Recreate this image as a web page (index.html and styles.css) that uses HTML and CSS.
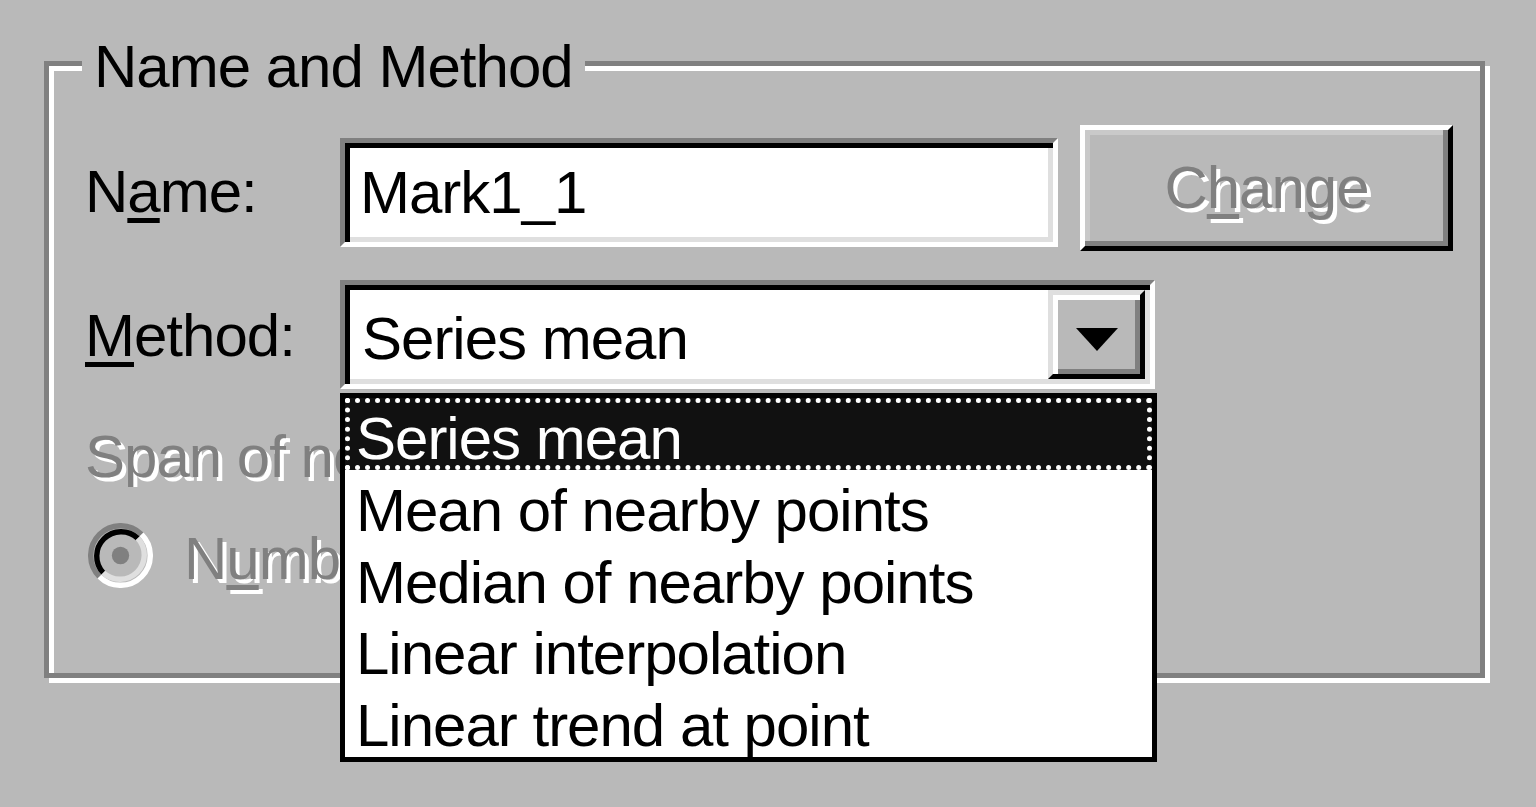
FILE: index.html
```html
<!DOCTYPE html>
<html lang="en">
<head>
<meta charset="utf-8">
<title>Name and Method</title>
<link rel="stylesheet" href="styles.css">
</head>
<body>
<div class="group">
  <div class="group-title">Name and Method</div>

  <div class="row row-name">
    <label class="lbl lbl-name">N<u>a</u>me:</label>
    <div class="field sunken">Mark1_1</div>
    <div class="btn disabled-text">C<u>h</u>ange</div>
  </div>

  <div class="row row-method">
    <label class="lbl lbl-method"><u>M</u>ethod:</label>
    <div class="combo-wrap">
      <div class="combo sunken">
        <span class="combo-value">Series mean</span>
        <span class="combo-btn">
          <svg class="arrow" width="42" height="23" viewBox="0 0 42 23"><polygon points="0,0 42,0 21,23" fill="#000"/></svg>
        </span>
      </div>
      <ul class="listbox">
        <li class="item selected">Series mean</li>
        <li class="item">Mean of nearby points</li>
        <li class="item">Median of nearby points</li>
        <li class="item">Linear interpolation</li>
        <li class="item">Linear trend at point</li>
      </ul>
    </div>
  </div>

  <div class="span-label disabled-text">Span of nearby points:</div>

  <div class="radio-row">
    <svg class="radio" width="65" height="65" viewBox="0 0 12 12">
      <path d="M2.11 9.89 A5.5 5.5 0 0 1 9.89 2.11" fill="none" stroke="#808080" stroke-width="1"/>
      <path d="M9.89 2.11 A5.5 5.5 0 0 1 2.11 9.89" fill="none" stroke="#ffffff" stroke-width="1"/>
      <path d="M2.82 9.18 A4.5 4.5 0 0 1 9.18 2.82" fill="none" stroke="#000000" stroke-width="1"/>
      <path d="M9.18 2.82 A4.5 4.5 0 0 1 2.82 9.18" fill="none" stroke="#dfdfdf" stroke-width="1"/>
      <circle cx="6" cy="6" r="1.6" fill="#808080"/>
    </svg>
    <span class="radio-label disabled-text">N<u>u</u>mber:</span>
  </div>
</div>
</body>
</html>
```

FILE: styles.css
```css
html, body {
  margin: 0;
  padding: 0;
  background: #b9b9b9;
}

body {
  width: 1536px;
  height: 807px;
  overflow: hidden;
  font-family: "Liberation Sans", Arial, sans-serif;
  font-size: 60px;
  letter-spacing: -1px;
  color: #000;
}

u {
  text-decoration: underline;
  text-decoration-thickness: 5px;
  text-underline-offset: 6px;
}

.group {
  position: relative;
  box-sizing: border-box;
  margin: 61px 0 0 44px;
  width: 1441px;
  height: 617px;
  border: 5px solid #808080;
  box-shadow: inset 5px 5px 0 #ffffff, 5px 5px 0 #ffffff;
  padding: 59px 0 0 36px;
}

.group-title {
  position: absolute;
  left: 33px;
  top: -29px;
  padding: 0 12px;
  line-height: 60px;
  background: #b9b9b9;
  white-space: nowrap;
}

.row {
  display: flex;
  align-items: flex-start;
}

.row-name {
  height: 126px;
}

.lbl {
  width: 255px;
  flex: none;
  line-height: 60px;
  white-space: nowrap;
}

.lbl-name {
  margin-top: 37px;
}

.sunken {
  box-sizing: border-box;
  border: 5px solid;
  border-color: #808080 #ffffff #ffffff #808080;
  box-shadow: inset 5px 5px 0 #000000, inset -5px -5px 0 #dfdfdf;
  background: #ffffff;
}

.field {
  margin-top: 13px;
  width: 718px;
  height: 109px;
  padding: 5px 5px 5px 15px;
  line-height: 89px;
  white-space: nowrap;
}

.btn {
  box-sizing: border-box;
  margin-left: 22px;
  width: 373px;
  height: 126px;
  padding: 5px;
  border: 5px solid;
  border-color: #ffffff #000000 #000000 #ffffff;
  box-shadow: inset -5px -5px 0 #808080, inset 5px 5px 0 #c9c9c9;
  text-align: center;
  line-height: 106px;
  white-space: nowrap;
}

.disabled-text {
  color: #808080;
  text-shadow: 4px 4px 0 #ffffff;
}

.row-method {
  margin-top: 29px;
  height: 109px;
}

.lbl-method {
  margin-top: 26px;
}

.combo-wrap {
  position: relative;
  width: 815px;
  height: 109px;
  flex: none;
}

.combo {
  display: flex;
  width: 815px;
  height: 109px;
  padding: 5px;
}

.combo-value {
  flex: 1;
  padding: 8px 0 0 12px;
  line-height: 81px;
  white-space: nowrap;
}

.combo-btn {
  box-sizing: border-box;
  flex: none;
  width: 97px;
  height: 89px;
  border: 5px solid;
  border-color: #dfdfdf #000000 #000000 #dfdfdf;
  box-shadow: inset 5px 5px 0 #ffffff, inset -5px -5px 0 #808080;
  background: #b9b9b9;
  display: flex;
  align-items: center;
  justify-content: center;
  padding-top: 10px;
}

.arrow {
  display: block;
}

.listbox {
  position: absolute;
  left: 0;
  top: 113px;
  box-sizing: border-box;
  width: 817px;
  height: 369px;
  margin: 0;
  padding: 0;
  list-style: none;
  border: 5px solid #000000;
  background: #ffffff;
  z-index: 2;
}

.item {
  box-sizing: border-box;
  height: 71.8px;
  padding: 10px 0 0 11px;
  line-height: 61.8px;
  white-space: nowrap;
}

.item.selected {
  background: #111111;
  color: #ffffff;
  outline: 5px dotted #ffffff;
  outline-offset: -5px;
}

.span-label {
  margin-top: 38px;
  width: 255px;
  overflow: hidden;
  line-height: 60px;
  white-space: nowrap;
}

.radio-row {
  display: flex;
  align-items: flex-start;
  margin-top: 42px;
  width: 255px;
  height: 60px;
}

.radio {
  display: block;
  flex: none;
  margin: -6px 0 0 3px;
}

.radio-label {
  margin-left: 31px;
  min-width: 0;
  overflow: hidden;
  line-height: 70px;
  height: 70px;
  margin-top: -5px;
  padding-top: 0;
  white-space: nowrap;
}
```
